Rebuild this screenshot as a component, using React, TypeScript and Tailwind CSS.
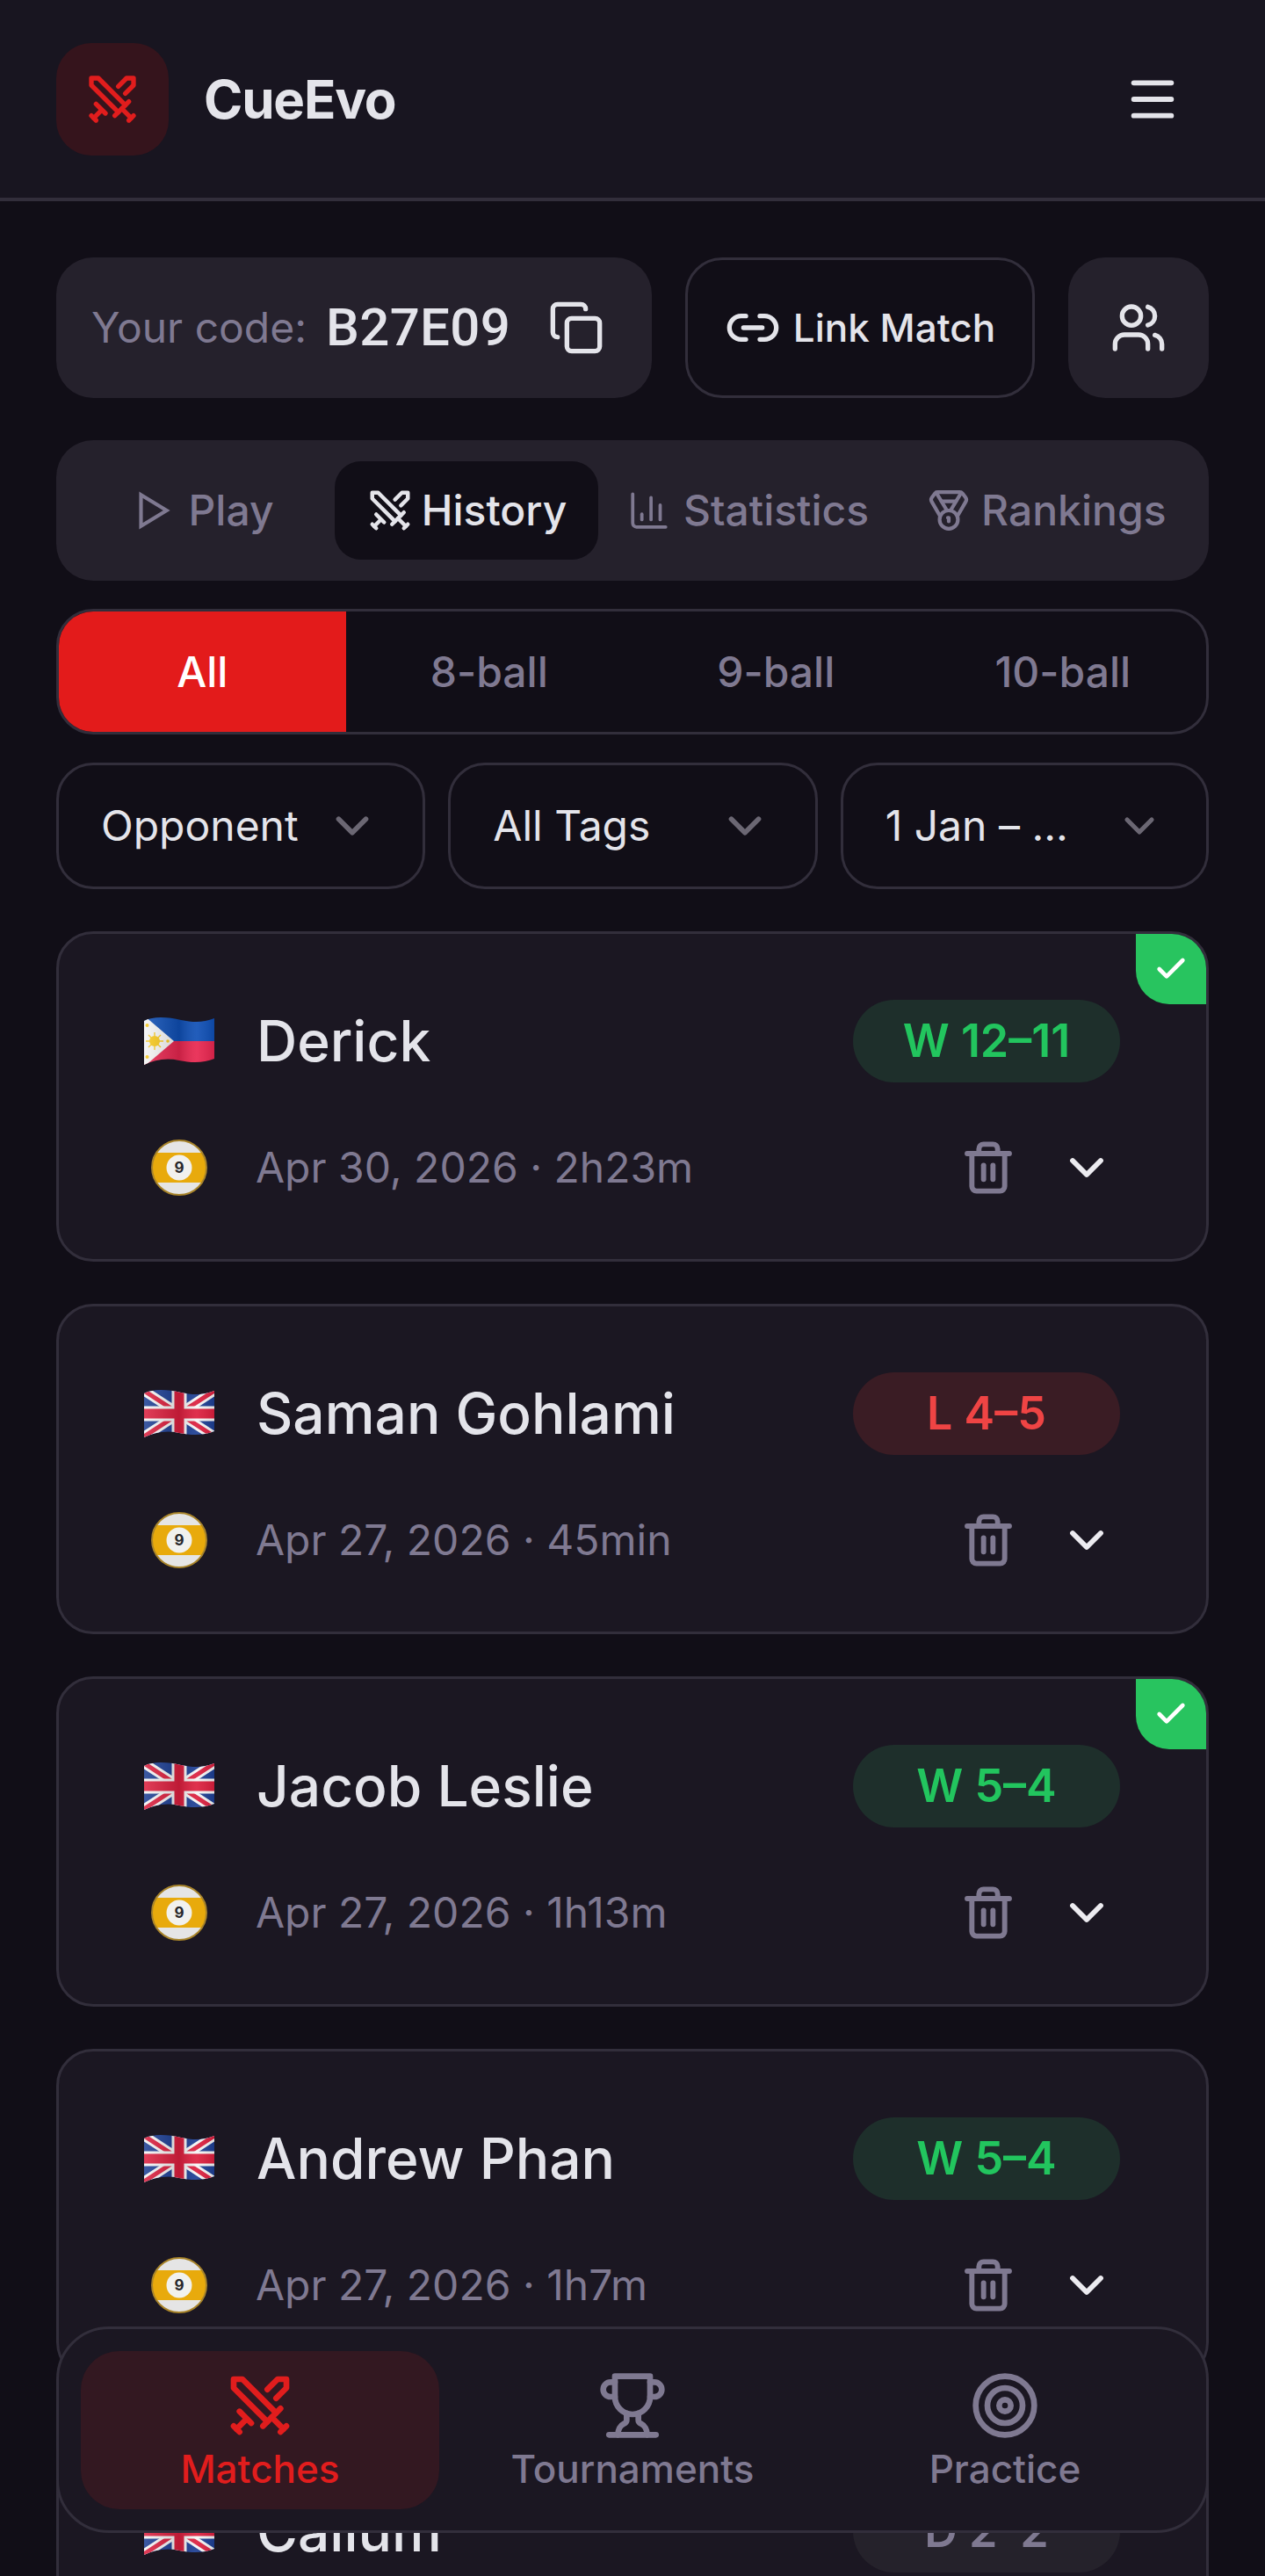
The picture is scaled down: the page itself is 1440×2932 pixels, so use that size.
import { Check, ChevronDown, Copy, Link2, Medal, Menu, Target, Trash2, Users, ChartColumn } from 'lucide-react'

function Swords({ className }: { className?: string }) {
  return (
    <svg viewBox="0 0 24 24" fill="none" stroke="currentColor" strokeWidth="2" strokeLinecap="round" strokeLinejoin="round" className={className}>
      <path d="M14.5 17.5 3 6V3h3l11.5 11.5" />
      <path d="m13 19 6-6" />
      <path d="m16 16 4 4" />
      <path d="m19 21 2-2" />
      <path d="M14.5 6.5 18 3h3v3l-3.5 3.5" />
      <path d="m5 14 4 4" />
      <path d="m7 17-3 3" />
      <path d="m3 19 2 2" />
    </svg>
  )
}

function PlayOutline({ className }: { className?: string }) {
  return (
    <svg viewBox="0 0 24 24" fill="none" stroke="currentColor" strokeWidth="2" strokeLinejoin="miter" className={className}>
      <path d="M6 3.5 20 12 6 20.5z" />
    </svg>
  )
}

function Cup({ className }: { className?: string }) {
  return (
    <svg viewBox="0 0 24 24" fill="none" stroke="currentColor" strokeWidth="2" strokeLinecap="round" strokeLinejoin="round" className={className}>
      <path d="M6 9H4.5a2.5 2.5 0 0 1 0-5H6" />
      <path d="M18 9h1.5a2.5 2.5 0 0 0 0-5H18" />
      <path d="M4 22h16" />
      <path d="M10 14.66V17c0 .55-.47.98-.97 1.21C7.85 18.75 7 20.24 7 22" />
      <path d="M14 14.66V17c0 .55.47.98.97 1.21C16.15 18.75 17 20.24 17 22" />
      <path d="M18 2H6v7a6 6 0 0 0 12 0V2Z" />
    </svg>
  )
}

function NineBall() {
  return (
    <svg viewBox="0 0 64 64" className="w-[64px] h-[64px]">
      <defs>
        <clipPath id="ball">
          <circle cx="32" cy="32" r="31" />
        </clipPath>
      </defs>
      <circle cx="32" cy="32" r="31" fill="#e5e5e5" />
      <rect x="0" y="15" width="64" height="34" fill="#e8aa0c" clipPath="url(#ball)" />
      <circle cx="32" cy="32" r="31" fill="none" stroke="#a8842a" strokeWidth="2" />
      <circle cx="32" cy="32" r="14.5" fill="#f1f1ee" />
      <text x="32" y="38" textAnchor="middle" fontSize="17" fontWeight="700" fill="#27272a" fontFamily="Inter, sans-serif">9</text>
    </svg>
  )
}

const wave = 'M0 6C12 0 28 2 42 5s26 3 38-2v46c-12 5-26 5-40 2S12 50 0 56z'

function FlagShade({ id }: { id: string }) {
  return (
    <>
      <linearGradient id={id} x1="0" x2="1" y1="0" y2="0">
        <stop offset="0" stopColor="#fff" stopOpacity="0.14" />
        <stop offset="0.5" stopColor="#000" stopOpacity="0.14" />
        <stop offset="0.75" stopColor="#fff" stopOpacity="0.08" />
        <stop offset="1" stopColor="#000" stopOpacity="0.1" />
      </linearGradient>
      <path d={wave} fill={`url(#${id})`} />
    </>
  )
}

function FlagPH() {
  return (
    <svg viewBox="0 0 80 58" className="w-[80px] h-[58px]">
      <defs>
        <clipPath id="ph">
          <path d={wave} />
        </clipPath>
      </defs>
      <g clipPath="url(#ph)">
        <rect width="80" height="30" fill="#0f4fb5" />
        <rect y="29" width="80" height="29" fill="#e8264f" />
        <path d="M0 0 34 29 0 58z" fill="#f5f5f5" />
        <circle cx="12" cy="29" r="6" fill="#f8c91c" />
        <path d="M12 19v20M2 29h20M5 22l14 14M19 22 5 36" stroke="#f8c91c" strokeWidth="1.4" />
        <circle cx="3.5" cy="11" r="2" fill="#f8c91c" />
        <circle cx="3.5" cy="47" r="2" fill="#f8c91c" />
        <circle cx="27" cy="29" r="1.8" fill="#f8c91c" />
      </g>
      <FlagShade id="shade-ph" />
    </svg>
  )
}

function FlagUK() {
  return (
    <svg viewBox="0 0 80 58" className="w-[80px] h-[58px]">
      <defs>
        <clipPath id="uk">
          <path d={wave} />
        </clipPath>
      </defs>
      <g clipPath="url(#uk)">
        <rect width="80" height="58" fill="#1d3f94" />
        <path d="M0 3 80 55M80 3 0 55" stroke="#f5f5f5" strokeWidth="11" />
        <path d="M0 3 80 55M80 3 0 55" stroke="#dc1f3e" strokeWidth="5" />
        <path d="M40 0v58M0 29h80" stroke="#f5f5f5" strokeWidth="17" />
        <path d="M40 0v58M0 29h80" stroke="#dc1f3e" strokeWidth="11" />
      </g>
      <FlagShade id="shade-uk" />
    </svg>
  )
}

type MatchRow = {
  name: string
  flag: 'ph' | 'uk'
  result: string
  tone: 'win' | 'loss' | 'draw'
  meta?: string
  verified?: boolean
}

const matches: MatchRow[] = [
  { name: 'Derick', flag: 'ph', result: 'W 12–11', tone: 'win', meta: 'Apr 30, 2026 · 2h23m', verified: true },
  { name: 'Saman Gohlami', flag: 'uk', result: 'L 4–5', tone: 'loss', meta: 'Apr 27, 2026 · 45min' },
  { name: 'Jacob Leslie', flag: 'uk', result: 'W 5–4', tone: 'win', meta: 'Apr 27, 2026 · 1h13m', verified: true },
  { name: 'Andrew Phan', flag: 'uk', result: 'W 5–4', tone: 'win', meta: 'Apr 27, 2026 · 1h7m' },
  { name: 'Callum', flag: 'uk', result: 'D 2–2', tone: 'draw' },
]

const toneClass = {
  win: 'bg-[#1e2f2b] text-[#22c55e]',
  loss: 'bg-[#3a1c24] text-[#ef4444]',
  draw: 'bg-[#25222b] text-[#7f7991]',
}

function MatchCard({ row }: { row: MatchRow }) {
  return (
    <div className="relative h-[376px] shrink-0 rounded-[42px] border-[3.5px] border-[#322e3b] bg-[#1b1722] overflow-hidden pl-[97px] pr-[98px] pt-[75px]">
      {row.verified && (
        <div className="absolute top-0 right-0 w-[80px] h-[80px] bg-[#28c45f] rounded-bl-[38px] flex items-center justify-center">
          <Check className="w-[40px] h-[40px] text-white" strokeWidth={2.8} />
        </div>
      )}
      <div className="flex items-center justify-between h-[94px]">
        <div className="flex items-center gap-[48px]">
          {row.flag === 'ph' ? <FlagPH /> : <FlagUK />}
          <span className="text-[64px] leading-none font-medium text-[#e4e4ea]">{row.name}</span>
        </div>
        <div className={`w-[304px] h-[94px] rounded-[47px] flex items-center justify-center text-[52px] font-semibold ${toneClass[row.tone]}`}>
          {row.result}
        </div>
      </div>
      {row.meta && (
        <div className="flex items-center justify-between mt-[65px] h-[64px]">
          <div className="flex items-center gap-[55px] pl-[8px]">
            <NineBall />
            <span className="text-[48px] leading-none text-[#7f7991]">{row.meta}</span>
          </div>
          <div className="flex items-center gap-[48px] pr-[6px]">
            <Trash2 className="w-[64px] h-[64px] text-[#7f7991]" strokeWidth={2.2} />
            <ChevronDown className="w-[64px] h-[64px] text-[#ecebf0]" strokeWidth={2.2} />
          </div>
        </div>
      )}
    </div>
  )
}

function Filter({ label, small }: { label: string; small?: boolean }) {
  return (
    <div className={`flex-1 h-[144px] rounded-[42px] border-[3.5px] border-[#322e3b] flex items-center justify-between pl-[48px] ${small ? 'pr-[48px]' : 'pr-[49px]'}`}>
      <span className="text-[48px] text-[#e4e4ea] whitespace-nowrap">{label}</span>
      <ChevronDown className={small ? 'w-[56px] h-[56px] text-[#6b6773]' : 'w-[62px] h-[62px] text-[#6b6773]'} strokeWidth={2.2} />
    </div>
  )
}

export default function App() {
  return (
    <div className="relative w-[1440px] h-[2932px] overflow-hidden bg-[#110e17] font-['Inter',sans-serif]">
      {/* Header */}
      <header className="h-[229px] bg-[#181520] border-b-[4px] border-[#322e3b] flex items-center justify-between pl-[64px] pr-[96px]">
        <div className="flex items-center gap-[40px]">
          <div className="w-[128px] h-[128px] rounded-[40px] bg-[#35141c] flex items-center justify-center">
            <Swords className="w-[64px] h-[64px] text-[#e11d1d]" />
          </div>
          <span className="text-[60px] font-bold tracking-[-1.2px] text-[#e4e4ea]">CueEvo</span>
        </div>
        <Menu className="w-[64px] h-[64px] text-[#e4e4ea]" strokeWidth={2.2} />
      </header>

      <main className="px-[64px] pt-[64px] flex flex-col">
        {/* Code row */}
        <div className="flex gap-[38px] h-[160px]">
          <div className="w-[678px] rounded-[42px] bg-[#25212c] flex items-center pl-[40px]">
            <span className="text-[48px] text-[#7f7991]">Your code:</span>
            <span className="ml-[22px] text-[60px] leading-none font-medium tracking-[0.3px] text-[#e4e4ea] font-['Roboto',sans-serif]">B27E09</span>
            <Copy className="ml-[43px] w-[64px] h-[64px] text-[#e4e4ea]" strokeWidth={2} />
          </div>
          <div className="w-[398px] rounded-[42px] border-[3.5px] border-[#322e3b] flex items-center justify-center gap-[14px]">
            <Link2 className="w-[64px] h-[64px] text-[#e4e4ea]" strokeWidth={2} />
            <span className="text-[44px] font-medium text-[#e4e4ea]">Link Match</span>
          </div>
          <div className="flex-1 rounded-[42px] bg-[#25212c] flex items-center justify-center">
            <Users className="w-[64px] h-[64px] text-[#e4e4ea]" strokeWidth={2} />
          </div>
        </div>

        {/* Tabs */}
        <div className="mt-[48px] h-[160px] rounded-[42px] bg-[#25212c] flex items-center pl-[24px] text-[48px] font-medium text-[#7f7991]">
          <div className="w-[293px] pr-[9px] flex items-center justify-center gap-[16px]">
            <PlayOutline className="w-[50px] h-[50px]" />
            <span>Play</span>
          </div>
          <div className="w-[300px] h-[112px] rounded-[30px] bg-[#110e17] text-[#e4e4ea] flex items-center justify-center gap-[9px]">
            <Swords className="w-[54px] h-[54px]" />
            <span>History</span>
          </div>
          <div className="ml-[33px] flex items-center gap-[14px]">
            <ChartColumn className="w-[50px] h-[50px]" strokeWidth={1.8} />
            <span>Statistics</span>
          </div>
          <div className="ml-[66px] flex items-center gap-[12px]">
            <Medal className="w-[50px] h-[50px]" strokeWidth={2} />
            <span>Rankings</span>
          </div>
        </div>

        {/* Game type */}
        <div className="mt-[32px] h-[143px] rounded-[42px] border-[3.5px] border-[#322e3b] overflow-hidden flex text-[48px] font-medium text-[#7f7991]">
          <div className="flex-1 flex items-center justify-center bg-[#e31b1b] text-white">All</div>
          <div className="flex-1 flex items-center justify-center">8-ball</div>
          <div className="flex-1 flex items-center justify-center">9-ball</div>
          <div className="flex-1 flex items-center justify-center">10-ball</div>
        </div>

        {/* Filters */}
        <div className="mt-[32px] flex gap-[26px]">
          <Filter label="Opponent" />
          <Filter label="All Tags" />
          <Filter label="1 Jan – ..." small />
        </div>

        {/* Matches */}
        <div className="mt-[48px] flex flex-col gap-[48px]">
          {matches.map((row) => (
            <MatchCard key={row.name} row={row} />
          ))}
        </div>
      </main>

      {/* Bottom nav */}
      <nav className="absolute left-[64px] right-[64px] top-[2648px] h-[235px] rounded-[60px] border-[3.5px] border-[#322e3b] bg-[#1b1722] flex items-center pl-[25px] pr-[25px]">
        <div className="w-[408px] h-[180px] pt-[2px] rounded-[44px] bg-[#331821] flex flex-col items-center justify-center gap-[6px] text-[#e11d1d]">
          <Swords className="w-[80px] h-[80px]" />
          <span className="text-[44px] font-medium leading-[52px]">Matches</span>
        </div>
        <div className="flex-1 pt-[2px] flex flex-col items-center justify-center gap-[6px] text-[#7f7991]">
          <Cup className="w-[80px] h-[80px]" />
          <span className="text-[44px] font-medium leading-[52px]">Tournaments</span>
        </div>
        <div className="w-[408px] pt-[2px] flex flex-col items-center justify-center gap-[6px] text-[#7f7991]">
          <Target className="w-[80px] h-[80px]" strokeWidth={2} />
          <span className="text-[44px] font-medium leading-[52px]">Practice</span>
        </div>
      </nav>
    </div>
  )
}
